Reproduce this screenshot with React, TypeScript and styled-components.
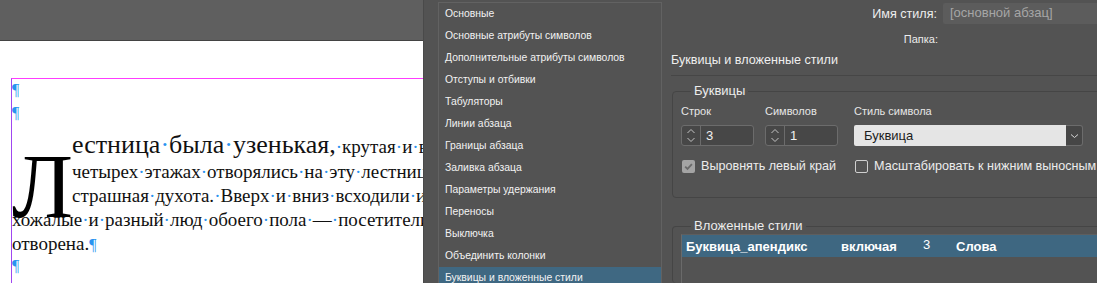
import styled, { createGlobalStyle } from "styled-components";

const GlobalStyle = createGlobalStyle`
  html, body {
    margin: 0;
    padding: 0;
  }
  body {
    background: #535353;
    width: 1097px;
    height: 283px;
    overflow: hidden;
    font-family: "Liberation Sans", Arial, sans-serif;
  }
`;

const sections = [
  "Основные",
  "Основные атрибуты символов",
  "Дополнительные атрибуты символов",
  "Отступы и отбивки",
  "Табуляторы",
  "Линии абзаца",
  "Границы абзаца",
  "Заливка абзаца",
  "Параметры удержания",
  "Переносы",
  "Выключка",
  "Объединить колонки",
  "Буквицы и вложенные стили",
];

// spaces are shown as blue dots, like InDesign hidden characters
const Spaced = ({ text }: { text: string }) => (
  <>
    {text.split(" ").map((w, i) => (
      <span key={i}>
        {i > 0 && <Dot>·</Dot>}
        {w}
      </span>
    ))}
  </>
);

const SpinArrows = () => (
  <Arrows>
    <svg width="10" height="19" viewBox="0 0 10 19">
      <path d="M1.5 7 L5 3.5 L8.5 7" fill="none" stroke="#c4c4c4" strokeWidth="1" />
      <path d="M1.5 12 L5 15.5 L8.5 12" fill="none" stroke="#c4c4c4" strokeWidth="1" />
    </svg>
  </Arrows>
);

const App = () => {
  return (
    <>
      <GlobalStyle />
      <Screen>
        <DocArea>
          <TopBand />
          <Page>
            <Frame>
              <Line>
                <Pil>¶</Pil>
              </Line>
              <Line>
                <Pil>¶</Pil>
              </Line>
              <BigLine>
                <Big>
                  <Spaced text="естница была узенькая," />
                </Big>
                <Spaced text=" крутая и вся в помоях." />
              </BigLine>
              <TextLine $indent>
                <Spaced text="четырех этажах отворялись на эту лестницу и стояли" />
              </TextLine>
              <TextLine $indent>
                <Spaced text="страшная духота. Вверх и вниз всходили и сходили" />
              </TextLine>
              <TextLine>
                <Spaced text="хожалые и разный люд обоего пола — посетители. Дверь" />
              </TextLine>
              <TextLine>
                отворена.<Pil>¶</Pil>
              </TextLine>
              <TextLine $lift>
                <Pil>¶</Pil>
              </TextLine>
              <DropCap>Л</DropCap>
            </Frame>
          </Page>
        </DocArea>

        <Dialog>
          <ListPanel>
            {sections.map((s, i) => (
              <ListItem key={s} $active={i === sections.length - 1}>
                {s}
              </ListItem>
            ))}
          </ListPanel>

          <Pane>
            <NameRow>
              <NameLabel>Имя стиля:</NameLabel>
              <NameInput>[основной абзац]</NameInput>
            </NameRow>
            <FolderRow>
              <SmallLabel>Папка:</SmallLabel>
            </FolderRow>
            <Title>Буквицы и вложенные стили</Title>
            <Rule />

            <Group $bottom={24}>
              <Legend>Буквицы</Legend>
              <FieldRow>
                <Field $w={73}>
                  <FieldLabel>Строк</FieldLabel>
                  <Spin>
                    <SpinArrows />
                    <SpinValue>3</SpinValue>
                  </Spin>
                </Field>
                <Field $w={73}>
                  <FieldLabel>Символов</FieldLabel>
                  <Spin>
                    <SpinArrows />
                    <SpinValue>1</SpinValue>
                  </Spin>
                </Field>
                <Field $w={229} $shift={5}>
                  <FieldLabel>Стиль символа</FieldLabel>
                  <Select>
                    <SelectValue>Буквица</SelectValue>
                    <SelectButton>
                      <svg width="9" height="6" viewBox="0 0 9 6">
                        <path d="M1 1.5 L4.5 4.5 L8 1.5" fill="none" stroke="#d8d8d8" strokeWidth="1" />
                      </svg>
                    </SelectButton>
                  </Select>
                </Field>
              </FieldRow>
              <CheckRow>
                <Check $w={173}>
                  <Box $checked>
                    <svg width="11" height="11" viewBox="0 0 11 11">
                      <path d="M2.2 5.6 L4.5 7.9 L8.9 3.2" fill="none" stroke="#6a6a6a" strokeWidth="1.8" />
                    </svg>
                  </Box>
                  Выровнять левый край
                </Check>
                <Check>
                  <Box />
                  Масштабировать к нижним выносным элементам
                </Check>
              </CheckRow>
            </Group>

            <Group $top={20} $pad={0}>
              <Legend>Вложенные стили</Legend>
              <Table>
                <TableRow>
                  <Cell $w={155}>Буквица_апендикс</Cell>
                  <Cell $w={82}>включая</Cell>
                  <Cell $w={33} $light>
                    3
                  </Cell>
                  <Cell>Слова</Cell>
                </TableRow>
              </Table>
            </Group>
          </Pane>
        </Dialog>
      </Screen>
    </>
  );
};

export default App;

const Screen = styled.div`
  display: flex;
  width: 1097px;
  height: 283px;
  overflow: hidden;
`;

/* ---------- document ---------- */

const DocArea = styled.div`
  width: 423px;
  flex-shrink: 0;
  display: flex;
  flex-direction: column;
  overflow: hidden;
  background: #ffffff;
`;

const TopBand = styled.div`
  height: 40px;
  background: #5f5f5f;
  border-bottom: 1px solid #434343;
`;

const Page = styled.div`
  flex: 1;
  padding: 37px 0 0 11px;
`;

const Frame = styled.div`
  position: relative;
  height: 100%;
  border-top: 1px solid #ff3cff;
  border-left: 1px solid #a046f0;
  font-family: "Liberation Serif", "Times New Roman", serif;
  font-size: 19px;
  color: #111;
  white-space: nowrap;
`;

const Line = styled.div`
  height: 23px;
  line-height: 19px;
`;

const BigLine = styled.div`
  height: 35px;
  line-height: 39px;
  padding-left: 60px;
`;

const Big = styled.span`
  font-size: 26px;
`;

const TextLine = styled.div<{ $indent?: boolean; $lift?: boolean }>`
  height: 24px;
  line-height: ${(p) => (p.$lift ? "17px" : "24px")};
  padding-left: ${(p) => (p.$indent ? "60px" : "0")};
`;

const Dot = styled.span`
  color: #2a93f0;
`;

const Pil = styled.span`
  color: #2a93f0;
  font-size: 16px;
`;

const DropCap = styled.div`
  position: absolute;
  left: 0;
  top: 63px;
  font-size: 90px;
  line-height: 90px;
  color: #000;
`;

/* ---------- dialog ---------- */

const Dialog = styled.div`
  flex: 1;
  display: flex;
  background: #535353;
  border-left: 1px solid #4a4a4a;
  color: #e8e8e8;
  overflow: hidden;
`;

const ListPanel = styled.div`
  width: 224px;
  flex-shrink: 0;
  box-sizing: border-box;
  margin: 2px 0 0 14px;
  border: 1px solid #626262;
  border-bottom: none;
`;

const ListItem = styled.div<{ $active?: boolean }>`
  height: 22px;
  line-height: 22px;
  padding-left: 6px;
  font-size: 10.4px;
  color: #f2f2f2;
  background: ${(p) => (p.$active ? "#3f6882" : "transparent")};
`;

const Pane = styled.div`
  flex: 1;
  padding-left: 9px;
  display: flex;
  flex-direction: column;
  overflow: hidden;
  min-width: 0;
`;

const NameRow = styled.div`
  display: grid;
  grid-template-columns: 266px 1fr;
  column-gap: 6px;
  margin-top: 3px;
  height: 21px;
  align-items: center;
`;

const NameLabel = styled.div`
  text-align: right;
  font-size: 12.6px;
  color: #eeeeee;
`;

const NameInput = styled.div`
  height: 21px;
  line-height: 20px;
  background: #5c5c5c;
  border-radius: 2px 0 0 2px;
  padding-left: 7px;
  font-size: 13px;
  color: #a6a6a6;
`;

const FolderRow = styled.div`
  display: grid;
  grid-template-columns: 267px;
  margin-top: 9px;
  height: 13px;
`;

const SmallLabel = styled.div`
  text-align: right;
  font-size: 11px;
  line-height: 13px;
  color: #ececec;
`;

const Title = styled.div`
  margin-top: 6px;
  font-size: 12.6px;
  line-height: 16px;
  color: #efefef;
`;

const Rule = styled.div`
  margin-top: 7px;
  height: 1px;
  width: 600px;
  background: #464646;
`;

const Group = styled.fieldset<{ $top?: number; $bottom?: number; $pad?: number }>`
  margin: ${(p) => p.$top ?? 7}px 0 0 1px;
  padding: ${(p) => p.$pad ?? 6}px 0 ${(p) => p.$bottom ?? 0}px 8px;
  width: 520px;
  min-inline-size: 0;
  flex-shrink: 0;
  border: 1px solid #454545;
  border-radius: 4px;
  ${(p) => (p.$bottom === undefined ? "flex: 1; border-bottom: none;" : "")}
`;

const Legend = styled.legend`
  margin-left: 10px;
  padding: 0 3px;
  font-size: 13px;
  line-height: 16px;
  color: #ececec;
`;

const FieldRow = styled.div`
  display: flex;
  gap: 11px;
`;

const Field = styled.div<{ $w: number; $shift?: number }>`
  width: ${(p) => p.$w}px;
  margin-left: ${(p) => p.$shift ?? 0}px;
  display: flex;
  flex-direction: column;
  gap: 7px;
`;

const FieldLabel = styled.div`
  font-size: 11px;
  line-height: 13px;
  color: #e6e6e6;
`;

const Spin = styled.div`
  height: 21px;
  box-sizing: border-box;
  display: flex;
  align-items: center;
  border: 1px solid #6c6c6c;
  border-radius: 3px;
  background: #474747;
`;

const Arrows = styled.div`
  width: 18px;
  height: 100%;
  display: flex;
  align-items: center;
  justify-content: center;
  border-right: 1px solid #6c6c6c;
`;

const SpinValue = styled.div`
  padding-left: 5px;
  font-size: 13px;
  color: #f0f0f0;
`;

const Select = styled.div`
  height: 21px;
  display: flex;
`;

const SelectValue = styled.div`
  flex: 1;
  background: #e5e5e5;
  border-radius: 2px 0 0 2px;
  padding-left: 10px;
  font-size: 13px;
  line-height: 21px;
  color: #1c1c1c;
`;

const SelectButton = styled.div`
  width: 17px;
  box-sizing: border-box;
  display: flex;
  align-items: center;
  justify-content: center;
  background: #464646;
  border: 1px solid #6c6c6c;
  border-left: none;
  border-radius: 0 3px 3px 0;
`;

const CheckRow = styled.div`
  display: flex;
  margin-top: 13px;
  height: 14px;
`;

const Check = styled.div<{ $w?: number }>`
  display: flex;
  align-items: center;
  gap: 6px;
  width: ${(p) => (p.$w ? `${p.$w}px` : "auto")};
  font-size: 12.6px;
  color: #ececec;
  white-space: nowrap;
`;

const Box = styled.div<{ $checked?: boolean }>`
  width: 13px;
  height: 13px;
  box-sizing: border-box;
  margin-left: 1px;
  flex-shrink: 0;
  display: flex;
  align-items: center;
  justify-content: center;
  border-radius: 2px;
  background: ${(p) => (p.$checked ? "#a4a4a4" : "transparent")};
  border: ${(p) => (p.$checked ? "none" : "1px solid #cfcfcf")};
`;

const Table = styled.div`
  height: 100%;
  border-left: 1px solid #6a6a6a;
  border-top: 1px solid #5e5e5e;
`;

const TableRow = styled.div`
  height: 22px;
  display: flex;
  align-items: center;
  background: #3e6781;
  padding-left: 4px;
  font-size: 13px;
  font-weight: bold;
  color: #ffffff;
`;

const Cell = styled.div<{ $w?: number; $light?: boolean }>`
  width: ${(p) => (p.$w ? `${p.$w}px` : "auto")};
  font-weight: ${(p) => (p.$light ? "normal" : "bold")};
  margin-top: ${(p) => (p.$light ? "-3px" : "0")};
`;
